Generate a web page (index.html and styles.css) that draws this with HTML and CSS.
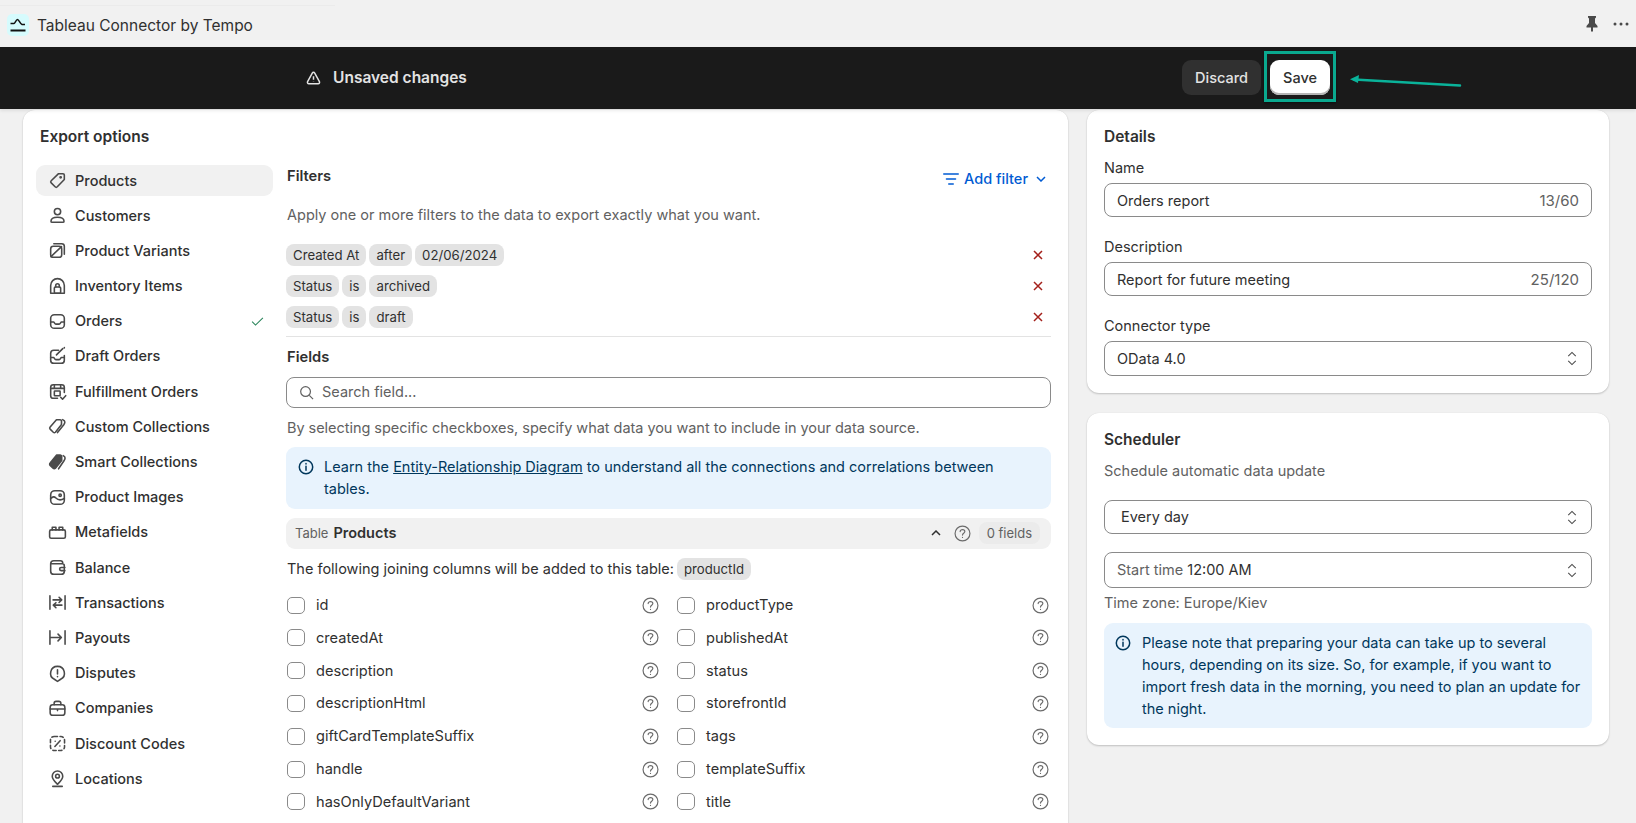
FILE: index.html
```html
<!DOCTYPE html>
<html lang="en">
<head>
<meta charset="utf-8">
<title>Tableau Connector by Tempo</title>
<link rel="stylesheet" href="styles.css">
</head>
<body>
<header class="topbar">
  <div class="app">
    <span class="logo"><svg viewBox="0 0 22 22" class="logo-svg"><path class="logo-wave" d="M3.500 9.500H7C8 9.500 9 5.500 10.500 5.500S13 10 15 10.500H18"/><path d="M3.500 16.500h15"/></svg></span>
    <span class="app-name">Tableau Connector by Tempo</span>
  </div>
  <div class="top-actions">
    <svg class="pin" viewBox="0 0 12 16"><path d="M2 0h8v1.500L9 2.500V7l2.500 3v1.500H7V15l-1 1-1-1v-3.500H.5V10L3 7V2.500L2 1.500z"/></svg>
    <svg class="dots" viewBox="0 0 16 4"><circle cx="2" cy="2" r="1.500"/><circle cx="8" cy="2" r="1.500"/><circle cx="14" cy="2" r="1.500"/></svg>
  </div>
</header>

<div class="savebar">
  <div class="unsaved">
    <svg class="warn" viewBox="0 0 16 16"><path d="M6.700 2.200a1.500 1.500 0 0 1 2.600 0l5 9.200a1.500 1.500 0 0 1-1.300 2.200H3a1.500 1.500 0 0 1-1.300-2.200z"/><path d="M8 5.500v3.700M8 11.200v.3"/></svg>
    <span>Unsaved changes</span>
  </div>
  <div class="save-actions">
    <button class="btn btn-discard">Discard</button>
    <button class="btn btn-save">Save</button>
    <span class="highlight"></span>
    <svg class="arrow" viewBox="0 0 114 12"><path class="arrow-line" d="M4 4.500 110 10.500"/><path class="arrow-head" d="M0 4.200 9 0 8 8z"/></svg>
  </div>
</div>

<main class="content">
  <section class="card export">
    <h2 class="card-title">Export options</h2>
    <div class="export-body">
      <nav class="nav">
        <a class="nav-item active"><svg class="ico" viewBox="0 0 20 20"><path d="M11 3.500h4.200a1.300 1.300 0 0 1 1.300 1.300V9L9.800 16a1.500 1.500 0 0 1-2.100 0L4 12.300a1.500 1.500 0 0 1 0-2.100z"/><circle cx="13" cy="7" r=".6"/></svg><span>Products</span></a>
        <a class="nav-item"><svg class="ico" viewBox="0 0 20 20"><circle cx="10" cy="6.300" r="3"/><path d="M3.800 15.500c0-2.500 2.700-3.800 6.200-3.800s6.200 1.300 6.200 3.800c0 .7-.4 1-1 1H4.800c-.6 0-1-.3-1-1z"/></svg><span>Customers</span></a>
        <a class="nav-item"><svg class="ico" viewBox="0 0 20 20"><rect x="3.500" y="6" width="10.500" height="10.500" rx="2.500"/><path d="M6.500 3.500H14a2.500 2.500 0 0 1 2.500 2.500v7.500M3.800 15.800 13.800 6.300"/></svg><span>Product Variants</span></a>
        <a class="nav-item"><svg class="ico" viewBox="0 0 20 20"><path d="M3.500 16.500V9a6.500 6.500 0 0 1 13 0v7.500z"/><rect x="7" y="10.500" width="6" height="6" rx="1"/><path d="M8.300 10.500V9a1.700 1.700 0 0 1 3.400 0v1.500"/></svg><span>Inventory Items</span></a>
        <a class="nav-item"><svg class="ico" viewBox="0 0 20 20"><rect x="3.500" y="3.500" width="13" height="13" rx="3.500"/><path d="M3.500 10.500h2.700c.8 0 1 2 2.300 2h3c1.300 0 1.500-2 2.300-2h2.700"/></svg><span>Orders</span><svg class="check" viewBox="0 0 14 10"><path d="M1 5.200 4.800 9 13 1"/></svg></a>
        <a class="nav-item"><svg class="ico" viewBox="0 0 20 20"><path d="M11 4H6.500a3 3 0 0 0-3 3v6.500a3 3 0 0 0 3 3h7a3 3 0 0 0 3-3V9"/><path d="M3.500 11h2.700c.8 0 1 2 2.300 2h3c1.300 0 1.500-2 2.300-2h2.700M9 8.500l6-6M16.500 1.500v.3"/></svg><span>Draft Orders</span></a>
        <a class="nav-item"><svg class="ico" viewBox="0 0 20 20"><path d="M10 16.500H6a2.500 2.500 0 0 1-2.500-2.500V6A2.500 2.500 0 0 1 6 3.500h8A2.500 2.500 0 0 1 16.500 6v5"/><path d="M3.500 7h13M7 3.500V7M13 3.500V7"/><rect x="7" y="9.500" width="5.500" height="4.500" rx=".5"/><path d="m13 15.500 1.800 1.800 3-3.300"/></svg><span>Fulfillment Orders</span></a>
        <a class="nav-item"><svg class="ico" viewBox="0 0 20 20"><path d="M9 3.500h3.500a1.300 1.300 0 0 1 1.300 1.300V8L8 15.500a1.500 1.500 0 0 1-2 0L3 12.500a1.500 1.500 0 0 1 0-2z"/><path d="M15 3.500c1 .3 2 1 2 2.300 0 1-.4 1.700-1 2.500l-6 7.500"/></svg><span>Custom Collections</span></a>
        <a class="nav-item"><svg class="ico" viewBox="0 0 20 20"><path class="fill" d="M9 3h3.500a1.500 1.500 0 0 1 1.500 1.500V8l-6 7.500a1.500 1.500 0 0 1-2.200 0L3 12.700a1.500 1.500 0 0 1 0-2.200z"/><path d="M15.500 3.500c1 .3 1.700 1.200 1.700 2.300 0 1-.4 1.700-1 2.500L11 16"/></svg><span>Smart Collections</span></a>
        <a class="nav-item"><svg class="ico" viewBox="0 0 20 20"><rect x="3.500" y="3.500" width="13" height="13" rx="4"/><circle cx="12.500" cy="7.800" r="1.100"/><path d="M3.500 11c2-2 3.500-2 5-.5s3.500 3 8 .5"/></svg><span>Product Images</span></a>
        <a class="nav-item"><svg class="ico" viewBox="0 0 20 20"><rect x="2.500" y="7.500" width="15" height="8" rx="1.500"/><path d="M5 7.500V5h3.500v2.500M11.500 7.500V5H15v2.500"/></svg><span>Metafields</span></a>
        <a class="nav-item"><svg class="ico" viewBox="0 0 20 20"><path d="M15 6.500V5.700A2.200 2.200 0 0 0 12.800 3.500H6.500a3 3 0 0 0-3 3v7a3 3 0 0 0 3 3h7a3 3 0 0 0 3-3V8.500a2 2 0 0 0-2-2H4"/><path d="M17 10h-3.500a1.500 1.500 0 0 0 0 3H17"/></svg><span>Balance</span></a>
        <a class="nav-item"><svg class="ico" viewBox="0 0 20 20"><path d="M2.800 3.500v13M17.200 3.500v13M5.800 7.500h8M11.500 5l2.500 2.500-2.500 2.500M14.200 12.500h-8M8.500 10.200l-2.500 2.300 2.500 2.500"/></svg><span>Transactions</span></a>
        <a class="nav-item"><svg class="ico" viewBox="0 0 20 20"><path d="M2.800 3.500v13M17.200 3.500v13M2.800 10h10.700M10.500 6.800l3.200 3.200-3.200 3.200"/></svg><span>Payouts</span></a>
        <a class="nav-item"><svg class="ico" viewBox="0 0 20 20"><path d="M10 3.200a6.500 6.500 0 0 1 3 12.300L10 17.500l-3-2A6.500 6.500 0 0 1 10 3.200z"/><path d="M10 6.500v4M10 12.800v.3"/></svg><span>Disputes</span></a>
        <a class="nav-item"><svg class="ico" viewBox="0 0 20 20"><rect x="3" y="6.500" width="14" height="10" rx="2.500"/><path d="M6.800 6.500V5a1.800 1.800 0 0 1 1.800-1.800h2.800A1.800 1.800 0 0 1 13.200 5v1.500M3 10.500h14M10 10.500v1.500"/></svg><span>Companies</span></a>
        <a class="nav-item"><svg class="ico" viewBox="0 0 20 20"><rect class="dash" x="3.300" y="3.300" width="13.400" height="13.400" rx="3.500"/><path d="M7.500 12.800l5-5.500M7.800 7.800v.1M12.300 12.300v.1"/></svg><span>Discount Codes</span></a>
        <a class="nav-item"><svg class="ico" viewBox="0 0 20 20"><path d="M10 15.500C7.500 13 5 10.800 5 7.800a5 5 0 0 1 10 0c0 3-2.500 5.200-5 7.700z"/><circle cx="10" cy="7.800" r="1.800"/><path d="M5.500 17.500h9"/></svg><span>Locations</span></a>
      </nav>

      <div class="main-col">
        <div class="filters-head">
          <h3 class="sub-title">Filters</h3>
          <a class="add-filter">
            <svg class="filter-ico" viewBox="0 0 16 12"><path d="M.8 1h14.400M3.500 6h9M5.800 11h4.400"/></svg>
            <span>Add filter</span>
            <svg class="chev-down" viewBox="0 0 10 6"><path d="M1 1l4 4 4-4"/></svg>
          </a>
        </div>
        <p class="muted lead">Apply one or more filters to the data to export exactly what you want.</p>
        <div class="filter-list">
          <div class="filter-row"><span class="chip">Created At</span><span class="chip chip-b">after</span><span class="chip chip-c">02/06/2024</span><svg class="x" viewBox="0 0 10 10"><path d="M1 1l8 8M9 1l-8 8"/></svg></div>
          <div class="filter-row"><span class="chip">Status</span><span class="chip chip-b">is</span><span class="chip chip-c">archived</span><svg class="x" viewBox="0 0 10 10"><path d="M1 1l8 8M9 1l-8 8"/></svg></div>
          <div class="filter-row"><span class="chip">Status</span><span class="chip chip-b">is</span><span class="chip chip-c">draft</span><svg class="x" viewBox="0 0 10 10"><path d="M1 1l8 8M9 1l-8 8"/></svg></div>
        </div>
        <hr class="divider">
        <h3 class="sub-title fields-title">Fields</h3>
        <div class="search">
          <svg class="search-ico" viewBox="0 0 16 16"><circle cx="7" cy="7" r="5.200"/><path d="m11 11 4 4"/></svg>
          <span>Search field...</span>
        </div>
        <p class="muted select-note">By selecting specific checkboxes, specify what data you want to include in your data source.</p>
        <div class="banner banner-wide">
          <svg class="info" viewBox="0 0 16 16"><circle cx="8" cy="8" r="6.700"/><path d="M8 7.300v4M8 4.600v.4"/></svg>
          <p>Learn the <a class="link">Entity-Relationship Diagram</a> to understand all the connections and correlations between tables.</p>
        </div>
        <div class="table-row">
          <span class="table-label">Table</span><strong class="table-name">Products</strong>
          <svg class="chev-up" viewBox="0 0 10 6"><path d="M1 5l4-4 4 4"/></svg>
          <svg class="help" viewBox="0 0 16 16"><circle cx="8" cy="8" r="7"/><path d="M5.800 6.200C5.800 5 6.800 4.300 8 4.300s2.200.8 2.200 1.900c0 1.600-2.200 1.600-2.200 3.300M8 11.500v.3"/></svg>
          <span class="count">0 fields</span>
        </div>
        <div class="joining"><span>The following joining columns will be added to this table:</span><span class="chip">productId</span></div>
        <div class="field-grid">
          <label class="field"><span class="cb"></span><span class="field-name">id</span><svg class="help" viewBox="0 0 16 16"><circle cx="8" cy="8" r="7"/><path d="M5.800 6.200C5.800 5 6.800 4.300 8 4.300s2.200.8 2.200 1.900c0 1.600-2.200 1.600-2.200 3.300M8 11.500v.3"/></svg></label>
          <label class="field"><span class="cb"></span><span class="field-name">productType</span><svg class="help" viewBox="0 0 16 16"><circle cx="8" cy="8" r="7"/><path d="M5.800 6.200C5.800 5 6.800 4.300 8 4.300s2.200.8 2.200 1.900c0 1.600-2.200 1.600-2.200 3.300M8 11.500v.3"/></svg></label>
          <label class="field"><span class="cb"></span><span class="field-name">createdAt</span><svg class="help" viewBox="0 0 16 16"><circle cx="8" cy="8" r="7"/><path d="M5.800 6.200C5.800 5 6.800 4.300 8 4.300s2.200.8 2.200 1.900c0 1.600-2.200 1.600-2.200 3.300M8 11.500v.3"/></svg></label>
          <label class="field"><span class="cb"></span><span class="field-name">publishedAt</span><svg class="help" viewBox="0 0 16 16"><circle cx="8" cy="8" r="7"/><path d="M5.800 6.200C5.800 5 6.800 4.300 8 4.300s2.200.8 2.200 1.900c0 1.600-2.200 1.600-2.200 3.300M8 11.500v.3"/></svg></label>
          <label class="field"><span class="cb"></span><span class="field-name">description</span><svg class="help" viewBox="0 0 16 16"><circle cx="8" cy="8" r="7"/><path d="M5.800 6.200C5.800 5 6.800 4.300 8 4.300s2.200.8 2.200 1.900c0 1.600-2.200 1.600-2.200 3.300M8 11.500v.3"/></svg></label>
          <label class="field"><span class="cb"></span><span class="field-name">status</span><svg class="help" viewBox="0 0 16 16"><circle cx="8" cy="8" r="7"/><path d="M5.800 6.200C5.800 5 6.800 4.300 8 4.300s2.200.8 2.200 1.900c0 1.600-2.200 1.600-2.200 3.300M8 11.500v.3"/></svg></label>
          <label class="field"><span class="cb"></span><span class="field-name">descriptionHtml</span><svg class="help" viewBox="0 0 16 16"><circle cx="8" cy="8" r="7"/><path d="M5.800 6.200C5.800 5 6.800 4.300 8 4.300s2.200.8 2.200 1.900c0 1.600-2.200 1.600-2.200 3.300M8 11.500v.3"/></svg></label>
          <label class="field"><span class="cb"></span><span class="field-name">storefrontId</span><svg class="help" viewBox="0 0 16 16"><circle cx="8" cy="8" r="7"/><path d="M5.800 6.200C5.800 5 6.800 4.300 8 4.300s2.200.8 2.200 1.900c0 1.600-2.200 1.600-2.200 3.300M8 11.500v.3"/></svg></label>
          <label class="field"><span class="cb"></span><span class="field-name">giftCardTemplateSuffix</span><svg class="help" viewBox="0 0 16 16"><circle cx="8" cy="8" r="7"/><path d="M5.800 6.200C5.800 5 6.800 4.300 8 4.300s2.200.8 2.200 1.900c0 1.600-2.200 1.600-2.200 3.300M8 11.500v.3"/></svg></label>
          <label class="field"><span class="cb"></span><span class="field-name">tags</span><svg class="help" viewBox="0 0 16 16"><circle cx="8" cy="8" r="7"/><path d="M5.800 6.200C5.800 5 6.800 4.300 8 4.300s2.200.8 2.200 1.900c0 1.600-2.200 1.600-2.200 3.300M8 11.500v.3"/></svg></label>
          <label class="field"><span class="cb"></span><span class="field-name">handle</span><svg class="help" viewBox="0 0 16 16"><circle cx="8" cy="8" r="7"/><path d="M5.800 6.200C5.800 5 6.800 4.300 8 4.300s2.200.8 2.200 1.900c0 1.600-2.200 1.600-2.200 3.300M8 11.500v.3"/></svg></label>
          <label class="field"><span class="cb"></span><span class="field-name">templateSuffix</span><svg class="help" viewBox="0 0 16 16"><circle cx="8" cy="8" r="7"/><path d="M5.800 6.200C5.800 5 6.800 4.300 8 4.300s2.200.8 2.200 1.900c0 1.600-2.200 1.600-2.200 3.300M8 11.500v.3"/></svg></label>
          <label class="field"><span class="cb"></span><span class="field-name">hasOnlyDefaultVariant</span><svg class="help" viewBox="0 0 16 16"><circle cx="8" cy="8" r="7"/><path d="M5.800 6.200C5.800 5 6.800 4.300 8 4.300s2.200.8 2.200 1.900c0 1.600-2.200 1.600-2.200 3.300M8 11.500v.3"/></svg></label>
          <label class="field"><span class="cb"></span><span class="field-name">title</span><svg class="help" viewBox="0 0 16 16"><circle cx="8" cy="8" r="7"/><path d="M5.800 6.200C5.800 5 6.800 4.300 8 4.300s2.200.8 2.200 1.900c0 1.600-2.200 1.600-2.200 3.300M8 11.500v.3"/></svg></label>
        </div>
      </div>
    </div>
  </section>

  <aside class="side">
    <section class="card details">
      <h2 class="card-title">Details</h2>
      <div class="form-field first">
        <label class="label">Name</label>
        <div class="input"><span>Orders report</span><span class="counter">13/60</span></div>
      </div>
      <div class="form-field">
        <label class="label">Description</label>
        <div class="input"><span>Report for future meeting</span><span class="counter">25/120</span></div>
      </div>
      <div class="form-field">
        <label class="label">Connector type</label>
        <div class="input select-tall"><span>OData 4.0</span><svg class="updown" viewBox="0 0 10 16"><path d="M1 5.500 5 1.500l4 4M1 10.500l4 4 4-4"/></svg></div>
      </div>
    </section>

    <section class="card scheduler">
      <h2 class="card-title">Scheduler</h2>
      <p class="muted sched-sub">Schedule automatic data update</p>
      <div class="input every"><span>Every day</span><svg class="updown" viewBox="0 0 10 16"><path d="M1 5.500 5 1.500l4 4M1 10.500l4 4 4-4"/></svg></div>
      <div class="input start"><span><span class="muted-inline">Start time</span> 12:00 AM</span><svg class="updown" viewBox="0 0 10 16"><path d="M1 5.500 5 1.500l4 4M1 10.500l4 4 4-4"/></svg></div>
      <p class="muted tz">Time zone: Europe/Kiev</p>
      <div class="banner banner-side">
        <svg class="info" viewBox="0 0 16 16"><circle cx="8" cy="8" r="6.700"/><path d="M8 7.300v4M8 4.600v.4"/></svg>
        <p>Please note that preparing your data can take up to several hours, depending on its size. So, for example, if you want to import fresh data in the morning, you need to plan an update for the night.</p>
      </div>
    </section>
  </aside>
</main>
</body>
</html>
```

FILE: styles.css
```css
* { box-sizing: border-box; }
html, body { height: 100%; }
body {
  margin: 0;
  height: 823px;
  overflow: hidden;
  display: flex;
  flex-direction: column;
  background: #f1f1f1;
  color: #303030;
  font-family: Inter, "Liberation Sans", sans-serif;
  font-size: 14.500px;
  line-height: 20px;
}
p, h2, h3 { margin: 0; }
svg { display: block; flex: none; fill: none; }

/* top bar */
.topbar {
  position: relative;
  height: 47px;
  flex: none;
  display: flex;
  align-items: center;
  justify-content: space-between;
  padding: 3px 7px 0 7px;
}
.topbar::before {
  content: "";
  position: absolute;
  left: 0;
  top: 5px;
  width: 335px;
  height: 1px;
  background: #ebebeb;
}
.app { display: flex; align-items: center; gap: 8px; }
.logo {
  width: 22px;
  height: 22px;
  border-radius: 5px;
  background: #d6fbfd;
  display: flex;
}
.logo-svg { width: 22px; height: 22px; stroke: #111; stroke-width: 2; }
.logo-wave { stroke-width: 1.500; }
.app-name { font-size: 15.500px; color: #303030; margin-top: 1px; }
.top-actions { display: flex; align-items: center; gap: 15px; margin-top: -3px; }
.pin { width: 12px; height: 16px; fill: #4a4a4a; }
.dots { width: 16px; height: 4px; fill: #4a4a4a; }

/* save bar */
.savebar {
  position: relative;
  z-index: 2;
  height: 62px;
  flex: none;
  background: #1a1a1a;
  box-shadow: 0 2px 3px rgba(0, 0, 0, .08);
  display: flex;
  align-items: center;
  justify-content: space-between;
  padding: 0 306px;
}
.unsaved {
  display: flex;
  align-items: center;
  gap: 12px;
  color: #e3e3e3;
  font-size: 15.500px;
  font-weight: 600;
}
.warn { width: 15px; height: 15px; stroke: #e3e3e3; stroke-width: 1.600; }
.save-actions { position: relative; display: flex; gap: 9px; margin-top: -1px; }
.btn {
  height: 35px;
  border: 0;
  border-radius: 9px;
  font: 550 14.500px Inter, "Liberation Sans", sans-serif;
}
.btn-discard { width: 79px; background: #303030; color: #e3e3e3; }
.btn-save {
  width: 60px;
  background: #fff;
  color: #303030;
  box-shadow: inset 0 -2px 0 #b5b5b5;
}
.highlight {
  position: absolute;
  left: 82px;
  top: -9px;
  width: 72px;
  height: 51px;
  border: 3px solid #0aa98f;
  box-shadow: 0 1px 3px rgba(0, 0, 0, .5);
}
.arrow {
  position: absolute;
  left: 168px;
  top: 15px;
  width: 114px;
  height: 12px;
}
.arrow-line { stroke: #0ab39a; stroke-width: 2.500; stroke-linecap: round; }
.arrow-head { fill: #0ab39a; }

/* layout */
.content {
  flex: 1;
  min-height: 0;
  overflow: hidden;
  display: flex;
  align-items: flex-start;
  gap: 19px;
  padding: 1px 27px 0 23px;
}
.card {
  background: #fff;
  border-radius: 12px;
  box-shadow: 0 1px 2px rgba(0, 0, 0, .2), 0 0 1px rgba(0, 0, 0, .1);
}
.card-title { font-size: 15.500px; line-height: 20px; font-weight: 600; }
.export {
  width: 1045px;
  flex: none;
  padding: 17px 17px 60px 13px;
}
.export > .card-title { padding-left: 4px; }
.export-body { display: flex; gap: 13px; margin-top: 18px; }

/* nav */
.nav { width: 237px; flex: none; display: flex; flex-direction: column; gap: 4.200px; }
.nav-item {
  height: 31px;
  display: flex;
  align-items: center;
  gap: 7px;
  padding: 0 9px 0 11px;
  border-radius: 9px;
  font-weight: 550;
  color: #303030;
}
.nav-item.active { background: #f1f1f1; }
.ico {
  width: 21px;
  height: 21px;
  stroke: #4a4a4a;
  stroke-width: 1.500;
  stroke-linecap: round;
  stroke-linejoin: round;
}
.ico .fill { fill: #4a4a4a; }
.ico .dash { stroke-dasharray: 3.200 2.400; }
.check {
  width: 13px;
  height: 9px;
  margin-left: auto;
  stroke: #29845a;
  stroke-width: 1.200;
}

/* main column */
.main-col { flex: 1; min-width: 0; }
.sub-title { font-size: 14.700px; font-weight: 600; line-height: 22px; padding-left: 1px; }
.filters-head { height: 40px; display: flex; justify-content: space-between; align-items: flex-start; }
.add-filter {
  display: flex;
  align-items: center;
  color: #005bd3;
  margin-top: 4px;
  padding-right: 5px;
  font-weight: 450;
}
.filter-ico { width: 16px; height: 12px; stroke: #005bd3; stroke-width: 1.600; stroke-linecap: round; margin-right: 5px; }
.chev-down { width: 10px; height: 6px; stroke: #005bd3; stroke-width: 1.500; margin-left: 8px; }
.muted { color: #616161; }
.lead { padding-left: 1px; }
.filter-list { margin-top: 19px; display: flex; flex-direction: column; gap: 9px; }
.filter-row { display: flex; align-items: center; height: 22px; }
.chip {
  height: 22px;
  padding: 0 7px;
  border-radius: 8px;
  background: #e3e3e3;
  font-size: 13.200px;
  line-height: 22px;
  font-weight: 400;
  white-space: nowrap;
}
.chip-b { margin-left: 3px; }
.chip-c { margin-left: 3px; }
.x { width: 10px; height: 10px; margin-left: auto; margin-right: 8px; stroke: #a4201b; stroke-width: 1.500; }
.divider { height: 1px; margin: 8px 0 0; border: 0; background: #e3e3e3; }
.fields-title { margin-top: 10px; line-height: 20px; }
.search {
  height: 31px;
  margin-top: 10px;
  display: flex;
  align-items: center;
  gap: 8px;
  padding: 0 12px 1px;
  border: 1px solid #8a8a8a;
  border-radius: 8px;
  color: #616161;
}
.search-ico { width: 15px; height: 15px; stroke: #616161; stroke-width: 1.300; }
.select-note { margin-top: 10px; padding-left: 1px; letter-spacing: -.04px; }
.banner {
  display: flex;
  border-radius: 9px;
  background: #e8f3fd;
  color: #00375c;
  line-height: 22px;
}
.banner-wide { margin-top: 9px; padding: 9px 40px 9px 12px; gap: 10px; height: 62px; }
.info { width: 16px; height: 16px; margin-top: 3px; stroke: #00375c; stroke-width: 1.500; stroke-linecap: round; }
.link { text-decoration: underline; color: #00375c; }
.table-row {
  height: 31px;
  margin-top: 9px;
  display: flex;
  align-items: center;
  padding: 0 11px 1px 9px;
  border-radius: 9px;
  background: #f1f1f1;
}
.table-label { color: #616161; font-size: 13px; }
.table-name { margin-left: 5px; font-weight: 600; }
.chev-up { width: 10px; height: 6px; margin-left: auto; stroke: #303030; stroke-width: 1.500; }
.count {
  height: 22px;
  padding: 0 8px;
  margin-left: 8px;
  border-radius: 8px;
  background: #ebebeb;
  color: #616161;
  font-size: 13px;
  line-height: 22px;
}
.table-row .help { margin-left: 13px; }
.help {
  width: 17px;
  height: 17px;
  stroke: #6b6b6b;
  stroke-width: 1.100;
  stroke-linecap: round;
}
.joining { display: flex; align-items: center; gap: 3px; height: 22px; margin-top: 9px; padding-left: 1px; }
.field-grid {
  margin-top: 8.600px;
  display: grid;
  grid-template-columns: 1fr 1fr;
  column-gap: 15px;
  grid-auto-rows: 32.830px;
}
.field { display: flex; align-items: center; padding-right: 2px; }
.cb {
  width: 18px;
  height: 17px;
  border: 1px solid #8a8a8a;
  border-radius: 5px;
  margin: 0 11px 0 1px;
  flex: none;
}
.field-name { flex: 1; font-size: 14.600px; }

/* side */
.side {
  flex: 1;
  display: flex;
  flex-direction: column;
  gap: 20px;
}
.details { padding: 17px 17px 17px; }
.scheduler { padding: 17px 17px 17px; }
.form-field { margin-top: 20px; }
.form-field.first { margin-top: 11px; }
.label { display: block; margin-bottom: 5px; }
.input {
  height: 34px;
  display: flex;
  align-items: center;
  justify-content: space-between;
  padding: 1px 12px 0;
  border: 1px solid #8a8a8a;
  border-radius: 8px;
}
.select-tall { height: 35px; padding-top: 0; }
.counter { color: #616161; font-size: 15px; }
.updown { width: 10px; height: 15px; stroke: #4a4a4a; stroke-width: 1.100; margin-right: 2px; }
.sched-sub { margin-top: 11px; }
.every { margin-top: 19px; padding-left: 16px; padding-top: 0; }
.start { margin-top: 18px; height: 36px; padding-top: 0; }
.muted-inline { color: #616161; }
.tz { margin-top: 5px; }
.banner-side { margin-top: 10px; height: 105px; padding: 9px 2px 8px 11px; gap: 11px; }
```
